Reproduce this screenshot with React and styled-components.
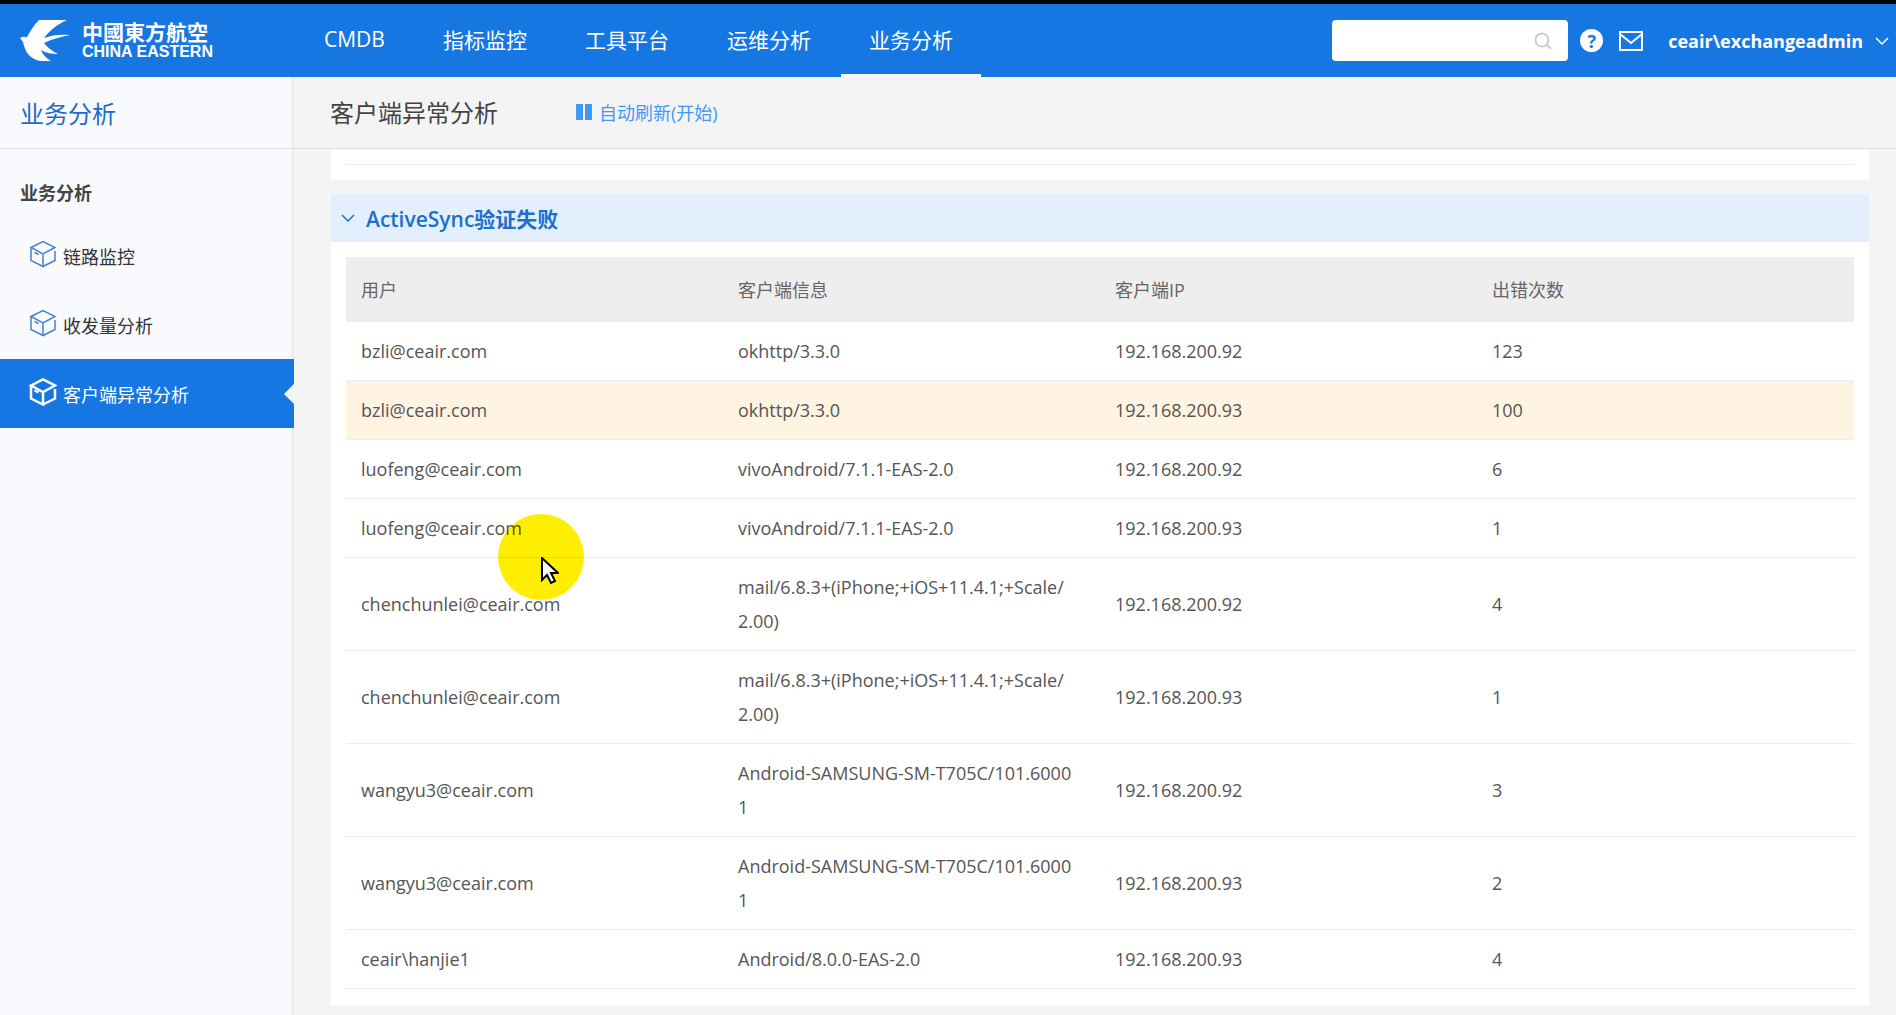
import React, { useState } from 'react';
import styled, { createGlobalStyle } from 'styled-components';

const menus = ['CMDB', '指标监控', '工具平台', '运维分析', '业务分析'];

const sideItems = ['链路监控', '收发量分析', '客户端异常分析'];

const columns = ['用户', '客户端信息', '客户端IP', '出错次数'];

const rows = [
  ['bzli@ceair.com', 'okhttp/3.3.0', '192.168.200.92', '123'],
  ['bzli@ceair.com', 'okhttp/3.3.0', '192.168.200.93', '100'],
  ['luofeng@ceair.com', 'vivoAndroid/7.1.1-EAS-2.0', '192.168.200.92', '6'],
  ['luofeng@ceair.com', 'vivoAndroid/7.1.1-EAS-2.0', '192.168.200.93', '1'],
  [
    'chenchunlei@ceair.com',
    'mail/6.8.3+(iPhone;+iOS+11.4.1;+Scale/2.00)',
    '192.168.200.92',
    '4',
  ],
  [
    'chenchunlei@ceair.com',
    'mail/6.8.3+(iPhone;+iOS+11.4.1;+Scale/2.00)',
    '192.168.200.93',
    '1',
  ],
  [
    'wangyu3@ceair.com',
    'Android-SAMSUNG-SM-T705C/101.60001',
    '192.168.200.92',
    '3',
  ],
  [
    'wangyu3@ceair.com',
    'Android-SAMSUNG-SM-T705C/101.60001',
    '192.168.200.93',
    '2',
  ],
  ['ceair\\hanjie1', 'Android/8.0.0-EAS-2.0', '192.168.200.93', '4'],
];

const Cube = () => (
  <CubeSvg viewBox='0 0 28 28' aria-hidden='true'>
    <path d='M2 7.5 14 1.5l12 6-12 6.5zM2 7.5v13l12 6V14M26 11v9.5l-12 6M5.5 12.5l4 2' />
  </CubeSvg>
);

const Chevron = () => (
  <ChevronSvg viewBox='0 0 14 10' aria-hidden='true'>
    <path d='M1 2l6 6 6-6' />
  </ChevronSvg>
);

const App = () => {
  const [activeMenu, setActiveMenu] = useState('业务分析');
  const [activeItem, setActiveItem] = useState('客户端异常分析');
  const [open, setOpen] = useState(true);

  return (
    <Page>
      <GlobalStyle />
      <Header>
        <Logo href='#'>
          <LogoSvg viewBox='0 0 50 42' aria-hidden='true'>
            <path d='M0 18C3 16 5 17 7 17 11 10 14 5 19 0L47 0C38 4 30 10 24 18 32 15 40 14 50 15 41 17 32 19 24 23 28 28 32 31 38 34 32 34 26 33 21 30 23 35 26 38 31 41L20 41C10 39 5 32 3 22Z' />
          </LogoSvg>
          <LogoText>
            <LogoCn>中國東方航空</LogoCn>
            <LogoEn>CHINA EASTERN</LogoEn>
          </LogoText>
        </Logo>
        <Nav>
          {menus.map((menu) => (
            <NavLink
              key={menu}
              href='#'
              $active={menu === activeMenu}
              onClick={() => setActiveMenu(menu)}
            >
              {menu}
            </NavLink>
          ))}
        </Nav>
        <Tools>
          <SearchBox>
            <SearchInput type='text' aria-label='搜索' />
            <SearchSvg viewBox='0 0 18 18' aria-hidden='true'>
              <circle cx='8' cy='8' r='6.5' />
              <path d='M12.5 12.5l4.5 4.5' />
            </SearchSvg>
          </SearchBox>
          <HelpButton type='button'>?</HelpButton>
          <IconButton type='button' aria-label='消息'>
            <MailSvg viewBox='0 0 24 20' aria-hidden='true'>
              <path d='M1 1h22v18H1zM1 3l11 9 11-9' />
            </MailSvg>
          </IconButton>
          <UserButton type='button'>
            ceair\exchangeadmin
            <Chevron />
          </UserButton>
        </Tools>
      </Header>

      <Body>
        <Sidebar>
          <SideTitle>业务分析</SideTitle>
          <SideGroup>业务分析</SideGroup>
          {sideItems.map((item) => (
            <SideLink
              key={item}
              href='#'
              $active={item === activeItem}
              onClick={() => setActiveItem(item)}
            >
              <Cube />
              <span>{item}</span>
            </SideLink>
          ))}
        </Sidebar>

        <Main>
          <TitleBar>
            <Title>客户端异常分析</Title>
            <RefreshButton type='button'>
              <PauseSvg viewBox='0 0 16 16' aria-hidden='true'>
                <path d='M0 0h7v16H0zM9 0h7v16H9z' />
              </PauseSvg>
              自动刷新(开始)
            </RefreshButton>
          </TitleBar>
          <Content>
            <PrevCard />
            <Card>
              <CardHeader type='button' onClick={() => setOpen(!open)}>
                <Chevron />
                ActiveSync验证失败
              </CardHeader>
              {open && (
                <CardBody>
                  <Table>
                    <thead>
                      <tr>
                        {columns.map((column) => (
                          <Th key={column}>{column}</Th>
                        ))}
                      </tr>
                    </thead>
                    <tbody>
                      {rows.map((row, i) => (
                        <Row key={i} $highlight={i === 1}>
                          {row.map((cell, j) => (
                            <Td key={j}>{cell}</Td>
                          ))}
                        </Row>
                      ))}
                    </tbody>
                  </Table>
                </CardBody>
              )}
            </Card>
          </Content>
        </Main>
      </Body>

      <Spot />
      <CursorSvg viewBox='0 0 18 28' aria-hidden='true'>
        <path d='M1 1v22l5-5 4 8 4-2-4-8h7z' />
      </CursorSvg>
    </Page>
  );
};

export default App;

const GlobalStyle = createGlobalStyle`
  * {
    box-sizing: border-box;
  }

  body {
    margin: 0;
    font-family: 'Open Sans', 'Noto Sans CJK SC', sans-serif;
    font-size: 18px;
    color: #555;
    background: #f4f4f5;
  }

  a {
    text-decoration: none;
  }

  button {
    padding: 0;
    border: none;
    background: none;
    font: inherit;
    cursor: pointer;
  }
`;

const Page = styled.div`
  display: flex;
  flex-direction: column;
  height: 100vh;
  overflow: hidden;
`;

const Header = styled.header`
  display: flex;
  flex: none;
  height: 77px;
  border-top: 4px solid #000;
  background: #1777e2;
  color: #fff;
`;

const Logo = styled.a`
  display: flex;
  align-items: center;
  gap: 12px;
  width: 296px;
  padding-left: 20px;
  color: #fff;
`;

const LogoSvg = styled.svg`
  width: 50px;
  height: 42px;
  fill: #fff;
`;

const LogoText = styled.div`
  display: flex;
  flex-direction: column;
  padding-bottom: 4px;
`;

const LogoCn = styled.span`
  font-family: 'Noto Sans CJK TC', sans-serif;
  font-size: 21px;
  font-weight: 700;
  line-height: 26px;
`;

const LogoEn = styled.span`
  font-family: 'Liberation Sans', sans-serif;
  font-size: 16px;
  font-weight: 700;
  line-height: 16px;
`;

const Nav = styled.nav`
  display: flex;
  gap: 2px;
`;

const NavLink = styled.a`
  display: flex;
  align-items: center;
  padding: 0 28px;
  border-bottom: 3px solid ${(props) => (props.$active ? '#fff' : 'transparent')};
  font-size: 21px;
  color: #fff;
`;

const Tools = styled.div`
  display: flex;
  align-items: center;
  margin-left: auto;
  padding-right: 7px;
`;

const SearchBox = styled.div`
  display: flex;
  align-items: center;
  width: 236px;
  height: 41px;
  margin-right: 12px;
  padding-right: 16px;
  border-radius: 4px;
  background: #fff;
`;

const SearchInput = styled.input`
  flex: 1;
  min-width: 0;
  padding: 0 12px;
  border: none;
  outline: none;
  background: transparent;
  font: inherit;
`;

const SearchSvg = styled.svg`
  width: 18px;
  height: 18px;
  fill: none;
  stroke: #ccc;
  stroke-width: 2;
`;

const IconButton = styled.button`
  display: flex;
  align-items: center;
  color: inherit;
`;

const HelpButton = styled(IconButton)`
  justify-content: center;
  width: 23px;
  height: 23px;
  margin-right: 16px;
  border-radius: 50%;
  background: #fff;
  color: #1777e2;
  font-size: 18px;
  font-weight: 700;
`;

const MailSvg = styled.svg`
  width: 24px;
  height: 20px;
  fill: none;
  stroke: #fff;
  stroke-width: 2;
`;

const UserButton = styled.button`
  display: flex;
  align-items: center;
  gap: 12px;
  margin-left: 25px;
  color: #fff;
  font-weight: 700;
`;

const ChevronSvg = styled.svg`
  width: 14px;
  height: 10px;
  fill: none;
  stroke: currentColor;
  stroke-width: 1.5;
`;

const Body = styled.div`
  display: flex;
  flex: 1;
  min-height: 0;
`;

const Sidebar = styled.aside`
  flex: none;
  width: 294px;
  background: #f8fafd;
  box-shadow: inset -3px 0 2px -1px #e8eaee;
`;

const SideTitle = styled.h2`
  display: flex;
  align-items: center;
  height: 72px;
  margin: 0;
  padding-left: 20px;
  border-bottom: 1px solid #dcdfe3;
  font-size: 24px;
  font-weight: 400;
  color: #1a6cc8;
`;

const SideGroup = styled.h3`
  display: flex;
  align-items: center;
  height: 72px;
  margin: 0;
  padding: 14px 0 0 20px;
  font-size: 18px;
  font-weight: 700;
  color: #444;
`;

const SideLink = styled.a`
  position: relative;
  display: flex;
  align-items: center;
  gap: 6px;
  height: 69px;
  padding-left: 29px;
  background: ${(props) => (props.$active ? '#1777e2' : 'transparent')};
  color: ${(props) => (props.$active ? '#fff' : '#333')};

  svg {
    margin-bottom: 4px;
    stroke: ${(props) => (props.$active ? '#fff' : '#4a80d4')};
    stroke-width: ${(props) => (props.$active ? 2.5 : 1.5)};
  }

  &::after {
    content: '';
    display: ${(props) => (props.$active ? 'block' : 'none')};
    position: absolute;
    right: 0;
    top: 25px;
    border: solid transparent;
    border-width: 10px 10px 10px 0;
    border-right-color: #f4f4f5;
  }
`;

const CubeSvg = styled.svg`
  width: 28px;
  height: 28px;
  fill: none;
`;

const Main = styled.main`
  display: flex;
  flex: 1;
  flex-direction: column;
  min-width: 0;
  padding-bottom: 10px;
`;

const TitleBar = styled.div`
  display: flex;
  flex: none;
  align-items: center;
  gap: 78px;
  height: 72px;
  padding: 0 36px 2px;
  border-bottom: 1px solid #dcdcdc;
`;

const Title = styled.h1`
  margin: 0;
  font-size: 24px;
  font-weight: 400;
  color: #444;
`;

const RefreshButton = styled.button`
  display: flex;
  align-items: center;
  gap: 7px;
  color: #4398f5;
`;

const PauseSvg = styled.svg`
  width: 16px;
  height: 16px;
  fill: #4398f5;
`;

const Content = styled.div`
  display: flex;
  flex: 1;
  flex-direction: column;
  gap: 14px;
  min-height: 0;
  padding: 0 27px 0 37px;
  overflow: hidden;
`;

const PrevCard = styled.section`
  flex: none;
  height: 31px;
  padding: 15px 15px 0;
  background: #fff;

  &::before {
    content: '';
    display: block;
    border-top: 1px solid #ebeef5;
  }
`;

const Card = styled.section`
  flex: 1 0 auto;
  background: #fff;
`;

const CardHeader = styled.button`
  display: flex;
  align-items: center;
  gap: 11px;
  width: 100%;
  height: 48px;
  padding: 0 10px;
  background: #e3effc;
  color: #1a6fd0;
  font-size: 21px;
  font-weight: 600;
`;

const CardBody = styled.div`
  padding: 15px;
`;

const Table = styled.table`
  width: 100%;
  border-collapse: collapse;
  table-layout: fixed;
  line-height: 34px;
`;

const Th = styled.th`
  padding: 16px 15px 15px;
  background: #eee;
  font-weight: 400;
  text-align: left;
  color: #666;
`;

const Row = styled.tr`
  background: ${(props) => (props.$highlight ? '#fff3e1' : 'transparent')};
`;

const Td = styled.td`
  padding: 12px 27px 12px 15px;
  border-bottom: 1px solid #ebeced;
  word-break: break-all;
`;

/* click highlight, drawn over the page */
const Spot = styled.div`
  position: fixed;
  left: 498px;
  top: 514px;
  width: 86px;
  height: 86px;
  border-radius: 50%;
  background: #ffee00;
  mix-blend-mode: multiply;
  pointer-events: none;
`;

const CursorSvg = styled.svg`
  position: fixed;
  left: 541px;
  top: 557px;
  width: 18px;
  height: 28px;
  fill: #fff;
  stroke: #000;
  stroke-width: 2;
  pointer-events: none;
`;
